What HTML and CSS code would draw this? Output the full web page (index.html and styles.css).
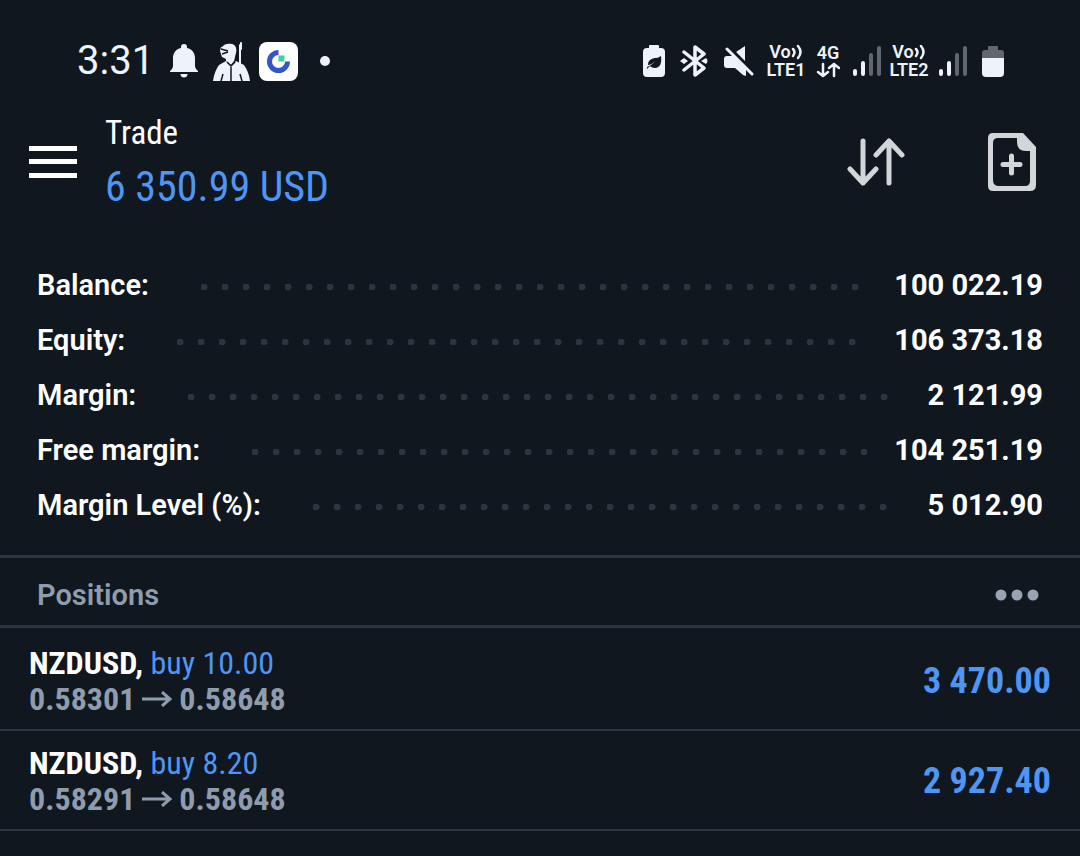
FILE: index.html
```
<!DOCTYPE html>
<html lang="en">
<head>
    <meta charset="UTF-8">
    <meta name="viewport" content="width=device-width, initial-scale=1.0">
    <title>Trade</title>
    <link rel="stylesheet" href="styles.css">
</head>
<body>
    <div class="status-bar">
        <div class="status-left">
            <span class="clock">3:31</span>
            <svg class="bell" width="28" height="34" viewBox="0 0 28 34">
                <path d="M14 0a3 3 0 0 1 3 3v1c5 1 8 5 8 10v8c0 2 1 3 3 5v1H0v-1c2-2 3-3 3-5v-8C3 9 6 5 11 4V3a3 3 0 0 1 3-3zM10.500 30h7a3.500 3.500 0 0 1-7 0z" fill="#eef3f9"/>
            </svg>
            <svg class="soldier" width="37" height="39" viewBox="0 0 37 39">
                <path d="M9 5c2-3 6-4 10-3 4 1 5 5 4 9-1 3-1 5-2 8l-3 4-5-4 0-2-4-2-1-3-1-3 1-4z" fill="#eef3f9"/>
                <path d="M13 19l5 5 5-5 8 4c3 4 5 9 6 16H0c1-7 3-12 6-16z" fill="#eef3f9"/>
                <path d="M27 22V3M28 1v6" stroke="#eef3f9" stroke-width="2" stroke-linecap="round"/>
                <path d="M8 7l7 2M9 12l6-2M18 25v14M14 20l4 4 4-4M8 39l2-7M29 39l-2-7" fill="none" stroke="#10171f" stroke-width="1.500"/>
            </svg>
            <svg class="app-badge" width="39" height="39" viewBox="0 0 39 39">
                <rect width="39" height="39" rx="8" fill="#fff"/>
                <path d="M19.500 10.500a9 9 0 1 0 9 9" fill="none" stroke="#3355c8" stroke-width="5"/>
                <path d="M19.500 13.500h6v6h-6z" fill="#3fd0a4"/>
            </svg>
            <span class="more-dot"></span>
        </div>
        <div class="status-right">
            <svg class="eco" width="22" height="32" viewBox="0 0 22 32">
                <path d="M6 3V1a1 1 0 0 1 1-1h8a1 1 0 0 1 1 1v2h2a4 4 0 0 1 4 4v21a4 4 0 0 1-4 4H4a4 4 0 0 1-4-4V7a4 4 0 0 1 4-4z" fill="#eef3f9"/>
                <path d="M18 11c1 7-1 12-6 12-2 0-4-1-5-2l-3 3v-2c3-1 6-3 8-6-3 3-5 4-7 4 0-5 4-7 8-7 2 0 3-1 5-2z" fill="#10171f"/>
            </svg>
            <svg class="bluetooth" width="29" height="32" viewBox="0 0 29 32">
                <path d="M4 7l20 16-9 7V2l9 7L4 25" fill="none" stroke="#eef3f9" stroke-width="3.500" stroke-linecap="round" stroke-linejoin="round"/>
                <path d="M0 16l4-3 4 3-4 3zM21 16l5-3q3 3 0 6z" fill="#eef3f9"/>
            </svg>
            <svg class="muted" width="30" height="32" viewBox="0 0 30 32">
                <path d="M21 1v15l-9-9zM0 14q0-3 3-3h6l13 13v7l-3-1-8-7H3q-3 0-3-3z" fill="#eef3f9"/>
                <path d="M7 4l22 24" stroke="#10171f" stroke-width="3"/>
                <path d="M3 4l25 25" stroke="#eef3f9" stroke-width="3" stroke-linecap="round"/>
            </svg>
            <div class="network lte">
                <span class="volte">Vo<svg width="12" height="17" viewBox="0 0 12 17"><path d="M2 6q3 3 0 7M7 3q5 6 0 12" fill="none" stroke="#eef3f9" stroke-width="2.500" stroke-linecap="round"/></svg></span>
                <span>LTE1</span>
            </div>
            <div class="network data">
                <span>4G</span>
                <svg width="24" height="16" viewBox="0 0 24 16"><path d="M7 2v12M2 10l5 4 5-4M18 14V2M13 6l5-4 5 4" fill="none" stroke="#eef3f9" stroke-width="2.500" stroke-linecap="round" stroke-linejoin="round"/></svg>
            </div>
            <svg class="signal" width="28" height="30" viewBox="0 0 28 30">
                <path d="M2 25v3M10 17v11" stroke="#eef3f9" stroke-width="4" stroke-linecap="round"/>
                <path d="M18 9v19M26 2v26" stroke="#61676e" stroke-width="4" stroke-linecap="round"/>
            </svg>
            <div class="network lte">
                <span class="volte">Vo<svg width="12" height="17" viewBox="0 0 12 17"><path d="M2 6q3 3 0 7M7 3q5 6 0 12" fill="none" stroke="#eef3f9" stroke-width="2.500" stroke-linecap="round"/></svg></span>
                <span>LTE2</span>
            </div>
            <svg class="signal" width="28" height="30" viewBox="0 0 28 30">
                <path d="M2 25v3M10 17v11" stroke="#eef3f9" stroke-width="4" stroke-linecap="round"/>
                <path d="M18 9v19M26 2v26" stroke="#61676e" stroke-width="4" stroke-linecap="round"/>
            </svg>
            <svg class="battery" width="22" height="31" viewBox="0 0 22 31">
                <path d="M0 12V7q0-3 3-3h3V1q0-1 1-1h8q1 0 1 1v3h3q3 0 3 3v5z" fill="#61676e"/>
                <path d="M0 12h22v15q0 4-4 4H4q-4 0-4-4z" fill="#eef3f9"/>
            </svg>
        </div>
    </div>

    <header class="header">
        <button class="icon-btn menu-btn" type="button" aria-label="Menu">
            <svg width="48" height="32" viewBox="0 0 48 32"><path d="M0 0h48v5H0zM0 13h48v5H0zM0 27h48v5H0z" fill="#fff"/></svg>
        </button>
        <div class="title">
            <h1>Trade</h1>
            <p class="profit">6 350.99 USD</p>
        </div>
        <div class="actions">
            <button class="icon-btn" type="button" aria-label="Sort">
                <svg width="58" height="48" viewBox="0 0 58 48"><path d="M16 3v42M3 31l13 14 13-14M42 45V3M29 17L42 3l13 14" fill="none" stroke="#d2d6d8" stroke-width="5" stroke-linecap="round" stroke-linejoin="round"/></svg>
            </button>
            <button class="icon-btn" type="button" aria-label="New order">
                <svg width="48" height="58" viewBox="0 0 48 58">
                    <path d="M5 0h30l13 14v38q0 6-6 6H5q-5 0-5-5V5q0-5 5-5zM10 5q-5 0-5 5v37q0 6 6 6h26q5 0 5-5V18h-4q-9 0-9-9V5z" fill="#d2d6d8" fill-rule="evenodd"/>
                    <path d="M23.500 23v17M15 31.500h17" stroke="#d2d6d8" stroke-width="5" stroke-linecap="round"/>
                </svg>
            </button>
        </div>
    </header>

    <main>
        <dl class="account">
            <div class="account-row"><dt>Balance:</dt><dd>100 022.19</dd></div>
            <div class="account-row"><dt>Equity:</dt><dd>106 373.18</dd></div>
            <div class="account-row"><dt>Margin:</dt><dd>2 121.99</dd></div>
            <div class="account-row"><dt>Free margin:</dt><dd>104 251.19</dd></div>
            <div class="account-row"><dt>Margin Level (%):</dt><dd>5 012.90</dd></div>
        </dl>

        <div class="section-header">
            <h2>Positions</h2>
            <button class="icon-btn" type="button" aria-label="More">
                <svg width="44" height="12" viewBox="0 0 44 12" fill="#98a3b3"><circle cx="6" cy="6" r="5.500"/><circle cx="22" cy="6" r="5.500"/><circle cx="38" cy="6" r="5.500"/></svg>
            </button>
        </div>

        <ul class="positions">
            <li class="position">
                <div>
                    <p class="symbol">NZDUSD, <span class="side">buy 10.00</span></p>
                    <p class="prices">0.58301 <svg width="30" height="16" viewBox="0 0 30 16"><path d="M0 8h28M20 1l8 7-8 7" fill="none" stroke="#8f9cae" stroke-width="3"/></svg> 0.58648</p>
                </div>
                <span class="amount">3 470.00</span>
            </li>
            <li class="position">
                <div>
                    <p class="symbol">NZDUSD, <span class="side">buy 8.20</span></p>
                    <p class="prices">0.58291 <svg width="30" height="16" viewBox="0 0 30 16"><path d="M0 8h28M20 1l8 7-8 7" fill="none" stroke="#8f9cae" stroke-width="3"/></svg> 0.58648</p>
                </div>
                <span class="amount">2 927.40</span>
            </li>
        </ul>
    </main>
</body>
</html>
```
FILE: styles.css
```
:root {
    --bg: #10171f;
    --line: #2e3540;
    --dot: #2d343d;
    --blue: #4f95f3;
    --muted: #8f9cae;
    --status: #eef3f9;
    --condensed: "Roboto Condensed", "Liberation Sans Narrow", Roboto, sans-serif;
}

* {
    margin: 0;
    padding: 0;
    box-sizing: border-box;
}

body {
    background: var(--bg);
    color: #fff;
    font-family: Roboto, sans-serif;
}

svg {
    display: block;
    flex: none;
}

.icon-btn {
    background: none;
    border: none;
    cursor: pointer;
}

/* Status bar */
.status-bar {
    display: flex;
    justify-content: space-between;
    align-items: center;
    height: 100px;
    padding: 22px 76px 0 77px;
    color: var(--status);
}

.status-left,
.status-right {
    display: flex;
    align-items: center;
}

.clock {
    font-size: 40px;
    font-weight: 400;
    line-height: 48px;
    margin-right: 16px;
}

.soldier {
    margin: 0 9px 0 15px;
}

.more-dot {
    width: 10px;
    height: 10px;
    margin-left: 22px;
    border-radius: 50%;
    background: var(--status);
}

.eco,
.bluetooth {
    margin-right: 15px;
}

.muted {
    margin-right: 12px;
}

.network {
    display: flex;
    flex-direction: column;
    align-items: center;
    font-size: 18px;
    font-weight: 600;
    line-height: 18px;
}

.lte {
    width: 40px;
    margin-right: 10px;
}

.volte {
    display: flex;
}

.data {
    margin-right: 13px;
}

.signal {
    margin-right: 8px;
}

.battery {
    margin-left: 7px;
}

/* Header */
.header {
    display: flex;
    align-items: center;
    height: 124px;
    padding: 0 44px 0 29px;
}

.title {
    flex: 1;
    margin-left: 28px;
    padding-bottom: 4px;
    font-family: var(--condensed);
}

.title h1 {
    font-size: 33px;
    font-weight: 400;
    line-height: 54px;
}

.profit {
    color: var(--blue);
    font-size: 42px;
    line-height: 54px;
}

.actions {
    display: flex;
    align-items: center;
    gap: 83px;
}

/* Account summary */
.account {
    padding: 33px 37px 23px;
}

.account-row {
    display: flex;
    align-items: center;
    height: 55px;
    font-size: 29px;
    font-weight: 600;
}

.account-row::after {
    content: "";
    order: 1;
    flex: 1;
    height: 6px;
    margin: 4px 27px 0 52px;
    background: radial-gradient(circle at 3px 3px, var(--dot) 3px, transparent 4px) 0 0 / 21px 6px repeat-x;
}

.account-row dd {
    order: 2;
    font-weight: 700;
}

/* Positions */
.section-header {
    display: flex;
    justify-content: space-between;
    align-items: center;
    height: 73px;
    padding: 7px 41px 0 37px;
    border-top: 3px solid var(--line);
    border-bottom: 3px solid var(--line);
}

.section-header h2 {
    color: var(--muted);
    font-size: 29px;
    font-weight: 600;
}

.positions {
    padding-top: 3px;
    font-family: var(--condensed);
    list-style: none;
}

.position {
    display: flex;
    justify-content: space-between;
    align-items: center;
    height: 100px;
    padding: 2px 29px 0;
    border-bottom: 2px solid var(--line);
}

.symbol,
.prices {
    font-size: 32px;
    font-weight: 700;
    line-height: 36px;
}

.side {
    color: var(--blue);
    font-weight: 400;
}

.prices {
    display: flex;
    align-items: center;
    gap: 7px;
    color: var(--muted);
}

.amount {
    color: var(--blue);
    font-size: 36px;
    font-weight: 700;
}
```
